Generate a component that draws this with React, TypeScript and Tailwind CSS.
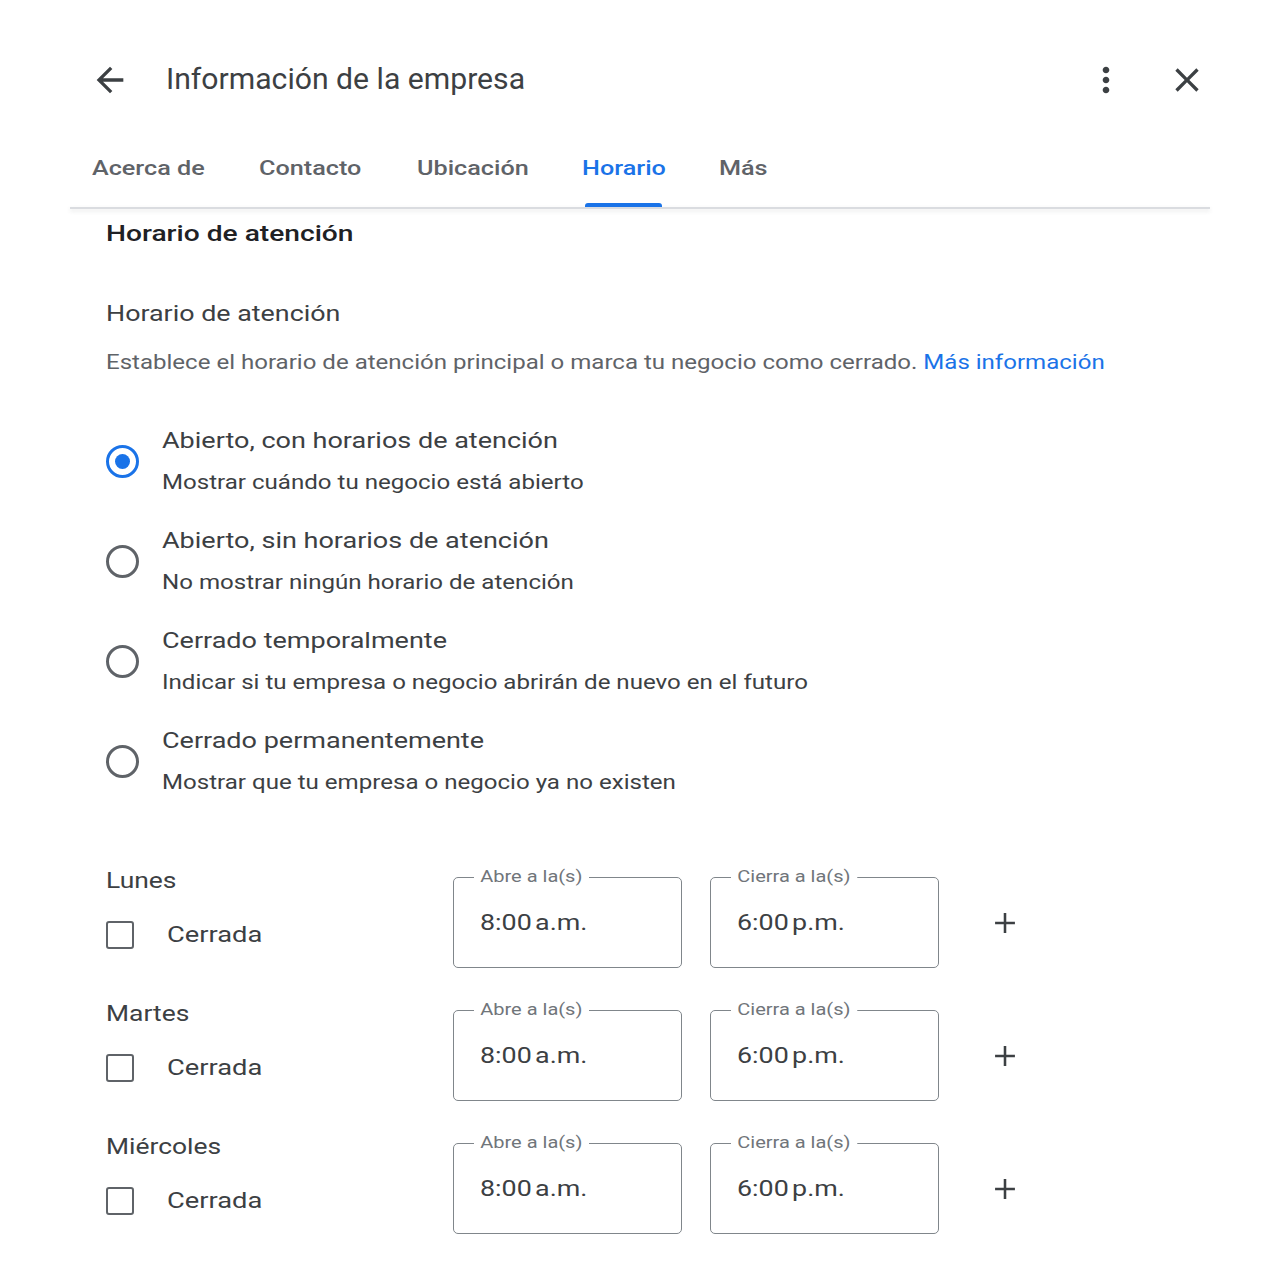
import React from "react";

const roboto = { fontFamily: "Roboto, 'Noto Sans', sans-serif" };

function Radio({ checked }: { checked?: boolean }) {
  return checked ? (
    <div className="w-[33px] h-[33px] rounded-full border-[3px] border-[#1a73e8] flex items-center justify-center shrink-0">
      <div className="w-[15px] h-[15px] rounded-full bg-[#1a73e8]" />
    </div>
  ) : (
    <div className="w-[33px] h-[33px] rounded-full border-[3px] border-[#5f6368] shrink-0" />
  );
}

const options = [
  ["Abierto, con horarios de atención", "Mostrar cuándo tu negocio está abierto", true],
  ["Abierto, sin horarios de atención", "No mostrar ningún horario de atención", false],
  ["Cerrado temporalmente", "Indicar si tu empresa o negocio abrirán de nuevo en el futuro", false],
  ["Cerrado permanentemente", "Mostrar que tu empresa o negocio ya no existen", false],
] as const;

function TimeBox({ label, value }: { label: string; value: string }) {
  return (
    <div className="relative w-[229px] h-[91px] border border-[#80868b] rounded-[5px] flex items-center pl-[26px] shrink-0">
      <span className="absolute top-[-12px] left-[20px] inline-block origin-left scale-x-[1.25] bg-white px-[5px] text-[16px] leading-[22px] text-[#70757a] whitespace-nowrap">
        {label}
      </span>
      <span className="inline-block origin-left scale-x-[1.22] text-[22px] text-[#3c4043] whitespace-nowrap">
        {value}
      </span>
    </div>
  );
}

function DayRow({ day }: { day: string }) {
  return (
    <div className="flex items-start h-[101px]">
      <div className="w-[347px] shrink-0">
        <div className="text-[22px] leading-[28px] text-[#3c4043]">
          <span className="inline-block origin-left scale-x-[1.2]">{day}</span>
        </div>
        <div className="flex items-center mt-[26px]">
          <div className="w-[28px] h-[28px] border-[2.5px] border-[#5f6368] rounded-[3px]" />
          <span className="ml-[33px] inline-block origin-left scale-x-[1.24] text-[22px] leading-[28px] text-[#3c4043]">
            Cerrada
          </span>
        </div>
      </div>
      <div className="flex items-center mt-[10px]">
        <TimeBox label="Abre a la(s)" value={"8:00\u202Fa.m."} />
        <div className="w-[28px] shrink-0" />
        <TimeBox label="Cierra a la(s)" value={"6:00\u202Fp.m."} />
        <svg className="ml-[49px]" width="34" height="34" viewBox="0 0 24 24">
          <path d="M19 12.9h-6.1V19h-1.8v-6.1H5v-1.8h6.1V5h1.8v6.1H19v1.8z" fill="#3c4043" />
        </svg>
      </div>
    </div>
  );
}

const tabs: { t: string; w: string }[] = [
  { t: "Acerca de", w: "w-[167px]" },
  { t: "Contacto", w: "w-[158px]" },
  { t: "Ubicación", w: "w-[165px]" },
  { t: "Horario", w: "w-[137px]" },
  { t: "Más", w: "w-[100px]" },
];

export default function App() {
  return (
    <div className="w-[1280px] h-[1280px] bg-white overflow-hidden" style={roboto}>
      {/* Header */}
      <div className="flex items-center h-[80px] mt-[40px] pl-[90px] pr-[73px]">
        <svg width="40" height="40" viewBox="0 0 24 24">
          <path d="M20 11H7.83l5.59-5.59L12 4l-8 8 8 8 1.41-1.41L7.83 13H20v-2z" fill="#3c4043" />
        </svg>
        <div className="ml-[36px] flex-1 text-[29px] text-[#3c4043]">
          <span className="inline-block origin-left scale-x-[1.04] whitespace-nowrap">Información de la empresa</span>
        </div>
        <svg width="40" height="40" viewBox="0 0 24 24">
          <path
            d="M12 8c1.1 0 2-.9 2-2s-.9-2-2-2-2 .9-2 2 .9 2 2 2zm0 2c-1.1 0-2 .9-2 2s.9 2 2 2 2-.9 2-2-.9-2-2-2zm0 6c-1.1 0-2 .9-2 2s.9 2 2 2 2-.9 2-2-.9-2-2-2z"
            fill="#3c4043"
          />
        </svg>
        <svg className="ml-[41px]" width="40" height="40" viewBox="0 0 24 24">
          <path
            d="M19 6.41L17.59 5 12 10.59 6.41 5 5 6.41 10.59 12 5 17.59 6.41 19 12 13.41 17.59 19 19 17.59 13.41 12z"
            fill="#3c4043"
          />
        </svg>
      </div>

      {/* Tabs */}
      <div className="flex items-end h-[87px] pl-[92px]">
        {tabs.map(({ t, w }) => {
          const active = t === "Horario";
          return (
            <div key={t} className={`flex flex-col items-start shrink-0 ${w}`}>
              <span
                className={`inline-block origin-left scale-x-[1.2] whitespace-nowrap text-[21px] leading-[28px] font-medium ${
                  active ? "text-[#1a73e8]" : "text-[#5f6368]"
                }`}
              >
                {t}
              </span>
              <div
                className={`mt-[21px] ml-[3px] h-[4px] w-[77px] rounded-t-[3px] ${active ? "bg-[#1a73e8]" : "bg-transparent"}`}
              />
            </div>
          );
        })}
      </div>
      <div className="mx-[70px] h-[2px] bg-[#dadce0] shadow-[0_2px_4px_rgba(60,64,67,0.15)]" />

      {/* Content */}
      <div className="pl-[106px]">
        <div className="mt-[11px] text-[22px] leading-[28px] font-medium text-[#202124]">
          <span className="inline-block origin-left scale-x-[1.28]">Horario de atención</span>
        </div>
        <div className="mt-[52px] text-[22px] leading-[28px] text-[#3c4043]">
          <span className="inline-block origin-left scale-x-[1.22]">Horario de atención</span>
        </div>
        <div className="mt-[22px] text-[19.5px] leading-[26px] text-[#5f6368]">
          <span className="inline-block origin-left scale-x-[1.233] whitespace-nowrap">
            Establece el horario de atención principal o marca tu negocio como cerrado.{" "}
            <span className="text-[#1a73e8]">Más información</span>
          </span>
        </div>

        <div className="mt-[50px] flex flex-col gap-[30px]">
          {options.map(([t, s, c]) => (
            <div key={t} className="flex items-center">
              <Radio checked={c} />
              <div className="ml-[23px]">
                <div className="text-[22.5px] leading-[28px] text-[#3c4043]">
                  <span className="inline-block origin-left scale-x-[1.2] whitespace-nowrap">{t}</span>
                </div>
                <div className="mt-[16px] text-[19.5px] leading-[26px] text-[#3c4043]">
                  <span className="inline-block origin-left scale-x-[1.235] whitespace-nowrap">{s}</span>
                </div>
              </div>
            </div>
          ))}
        </div>

        <div className="mt-[71px] flex flex-col gap-[32px]">
          <DayRow day="Lunes" />
          <DayRow day="Martes" />
          <DayRow day="Miércoles" />
        </div>
      </div>
    </div>
  );
}
